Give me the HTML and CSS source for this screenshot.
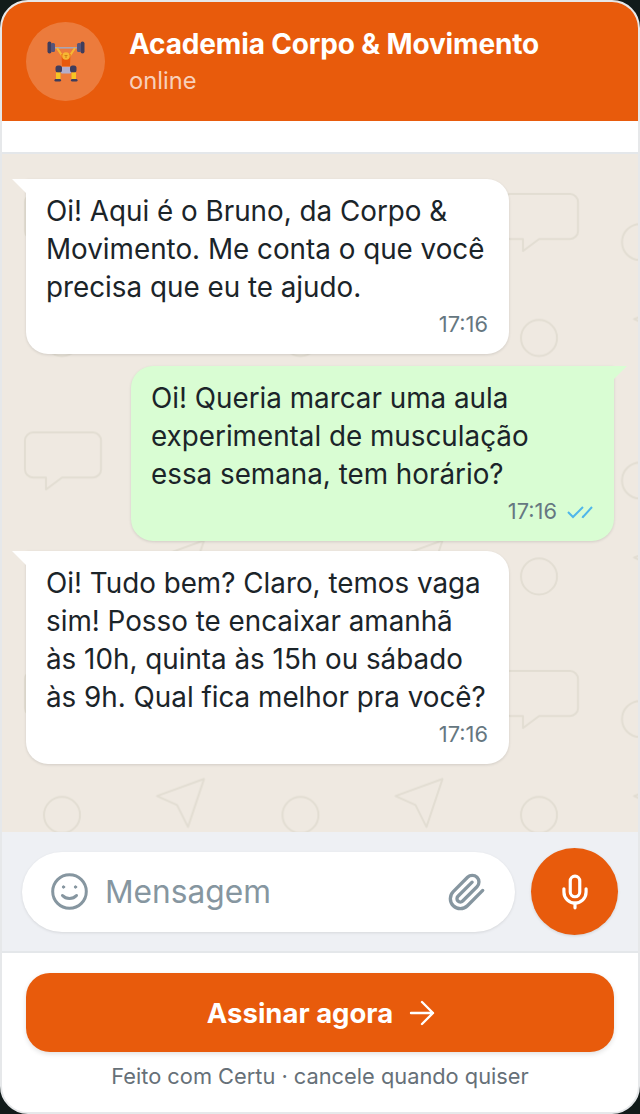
FILE: index.html
```html
<!DOCTYPE html>
<html lang="pt-BR">

<head>
    <meta charset="UTF-8">
    <meta name="viewport" content="width=device-width, initial-scale=1.0">
    <title>Academia Corpo &amp; Movimento</title>
    <link rel="stylesheet" href="styles.css">
</head>

<body>
    <div class="phone">
        <header class="chat-header">
            <div class="avatar">
                <svg width="40" height="42" viewBox="0 0 40 42">
                    <rect x="3" y="6" width="34" height="1.600" fill="#a9a5b4" />
                    <rect x="1.500" y="0.500" width="4" height="12" rx="2" fill="#3f3d5c" />
                    <rect x="5" y="2" width="4" height="9" rx="1.500" fill="#56547a" />
                    <rect x="34.500" y="0.500" width="4" height="12" rx="2" fill="#3f3d5c" />
                    <rect x="31" y="2" width="4" height="9" rx="1.500" fill="#56547a" />
                    <path d="M11 7l6 9M29 7l-6 9" stroke="#f7b733" stroke-width="2.200" fill="none" />
                    <path d="M15.500 13h9l-.5 12h-8z" fill="#e8590c" />
                    <circle cx="20" cy="15" r="3.800" fill="#f7b733" />
                    <path d="M18.500 14.500h3M20 14.500v2.500" stroke="#c9750f" stroke-width="0.800" fill="none" />
                    <rect x="15" y="26" width="10" height="6.500" rx="1" fill="#b3aecb" />
                    <rect x="9.500" y="24.500" width="6.500" height="7" rx="2.500" fill="#3f3d5c" />
                    <rect x="24" y="24.500" width="6.500" height="7" rx="2.500" fill="#3f3d5c" />
                    <rect x="10" y="31.500" width="4.500" height="6.500" fill="#f6c624" />
                    <rect x="25.500" y="31.500" width="4.500" height="6.500" fill="#f6c624" />
                    <rect x="8.500" y="38" width="6.500" height="2.400" rx="1.200" fill="#3f3d5c" />
                    <rect x="25" y="38" width="6.500" height="2.400" rx="1.200" fill="#3f3d5c" />
                </svg>
            </div>
            <div class="header-text">
                <div class="contact-name">Academia Corpo &amp; Movimento</div>
                <div class="contact-status">online</div>
            </div>
        </header>

        <div class="top-strip"></div>

        <main class="chat">
            <!-- wallpaper doodles -->
            <svg class="wallpaper" width="100%" height="100%">
                <defs>
                    <pattern id="doodles" width="238.5" height="238.5" patternUnits="userSpaceOnUse">
                        <g fill="none" stroke="#e2ddd2" stroke-width="2" stroke-linejoin="round">
                            <path d="M31 40h60a8 8 0 0 1 8 8v29a8 8 0 0 1-8 8H60L44 97V85H31a8 8 0 0 1-8-8V48a8 8 0 0 1 8-8Z" />
                            <circle cx="60" cy="184" r="18" />
                            <circle cx="161" cy="88" r="18" />
                            <path d="M155 165l47-17-16 48-11-22Z" />
                        </g>
                    </pattern>
                </defs>
                <rect width="100%" height="100%" fill="url(#doodles)" />
            </svg>

            <div class="bubble received">
                <p>Oi! Aqui é o Bruno, da Corpo &amp; Movimento. Me conta o que você precisa que eu te ajudo.</p>
                <div class="meta">17:16</div>
            </div>

            <div class="bubble sent">
                <p>Oi! Queria marcar uma aula experimental de musculação essa semana, tem horário?</p>
                <div class="meta">17:16
                    <svg class="ticks" width="26" height="14" viewBox="0 0 26 14">
                        <path d="M1 7l5 5 10-10M15 11.500l1 .5 9-10" fill="none" stroke="#4fb6ea" stroke-width="2" />
                    </svg>
                </div>
            </div>

            <div class="bubble received third">
                <p>Oi! Tudo bem? Claro, temos vaga sim! Posso te encaixar amanhã às 10h, quinta às 15h ou sábado às 9h. Qual fica melhor pra você?</p>
                <div class="meta">17:16</div>
            </div>
        </main>

        <div class="composer">
            <div class="input-pill">
                <svg class="smile" width="37" height="37" viewBox="0 0 37 37" fill="none" stroke="#8696a0" stroke-width="3" stroke-linecap="round">
                    <circle cx="18.500" cy="18.500" r="16.800" />
                    <path d="M11.500 22.500c3.500 4 10.500 4 14 0" />
                    <circle cx="12.500" cy="14" r="1.200" fill="#8696a0" stroke-width="1" />
                    <circle cx="24.500" cy="14" r="1.200" fill="#8696a0" stroke-width="1" />
                </svg>
                <span class="placeholder">Mensagem</span>
                <svg class="clip" width="40" height="40" viewBox="0 0 24 24" fill="none" stroke="#8696a0" stroke-width="2" stroke-linecap="round" stroke-linejoin="round">
                    <path d="m21.44 11.050-9.190 9.190a6 6 0 0 1-8.490-8.490l8.570-8.570A4 4 0 1 1 18 8.840l-8.590 8.570a2 2 0 0 1-2.830-2.830l8.490-8.480" />
                </svg>
            </div>
            <div class="mic-button">
                <svg width="38" height="38" viewBox="0 0 24 24" fill="none" stroke="#fff" stroke-width="2" stroke-linecap="round" stroke-linejoin="round">
                    <path d="M12 2a3 3 0 0 0-3 3v7a3 3 0 0 0 6 0V5a3 3 0 0 0-3-3Z" />
                    <path d="M19 10v2a7 7 0 0 1-14 0v-2" />
                    <path d="M12 19v3" />
                </svg>
            </div>
        </div>

        <footer class="cta">
            <button class="cta-button">Assinar agora
                <svg class="arrow" width="22" height="22" viewBox="5 5 14 14" fill="none" stroke="#fff" stroke-width="1.500" stroke-linecap="round" stroke-linejoin="round">
                    <path d="M5 12h14M12 5l7 7-7 7" />
                </svg>
            </button>
            <div class="cta-note">Feito com Certu · cancele quando quiser</div>
        </footer>
    </div>
</body>

</html>
```

FILE: styles.css
```css
* {
    box-sizing: border-box;
}

body {
    margin: 0;
    background-color: #111b1a;
    font-family: Inter, "Liberation Sans", sans-serif;
}

/* Outer rounded frame */
.phone {
    display: flex;
    flex-direction: column;
    width: 640px;
    height: 1114px;
    border: 2px solid #e6e8ea;
    border-radius: 28px;
    overflow: hidden;
    background-color: #fff;
}

/* Header */
.chat-header {
    display: flex;
    align-items: center;
    gap: 24px;
    height: 119px;
    padding: 0 24px;
    background-color: #e85b0c;
    flex-shrink: 0;
}

.avatar {
    display: flex;
    align-items: center;
    justify-content: center;
    width: 79px;
    height: 79px;
    border-radius: 50%;
    background-color: rgba(255, 255, 255, 0.2);
}

.contact-name {
    color: #fff;
    font-size: 28px;
    font-weight: 700;
    letter-spacing: -0.15px;
    line-height: 36px;
}

.contact-status {
    margin-top: 3px;
    color: rgba(255, 255, 255, 0.72);
    font-size: 23.7px;
    line-height: 32px;
}

.header-text {
    margin-top: -1px;
}

.top-strip {
    height: 33px;
    border-bottom: 2px solid #e4e7ea;
    flex-shrink: 0;
}

/* Chat area */
.chat {
    position: relative;
    display: flex;
    flex-direction: column;
    flex: 1;
    padding: 25px 24px 0;
    background-color: #efe9e1;
    overflow: hidden;
}

.wallpaper {
    position: absolute;
    top: 0;
    left: 0;
}

.bubble {
    position: relative;
    width: 483px;
    padding: 13px 21px 16px 20px;
    background-color: #fff;
    border-radius: 0 22px 22px 22px;
    box-shadow: 0 1px 3px rgba(0, 0, 0, 0.12);
    color: #1b2429;
    font-size: 27.8px;
    line-height: 38px;
}

.bubble p {
    margin: 0;
}

.bubble::before {
    content: "";
    position: absolute;
    top: 0;
    width: 14px;
    height: 14px;
    background-color: inherit;
}

.received::before {
    left: -14px;
    clip-path: polygon(0 0, 100% 0, 100% 100%);
}

.sent {
    align-self: flex-end;
    margin-top: 12px;
    background-color: #d9fdd3;
    border-radius: 22px 0 22px 22px;
}

.sent::before {
    right: -13px;
    clip-path: polygon(0 0, 100% 0, 0 100%);
}

.third {
    margin-top: 10px;
}

.meta {
    display: flex;
    align-items: center;
    justify-content: flex-end;
    gap: 10px;
    height: 28px;
    margin-top: 4px;
    color: #667781;
    font-size: 21.8px;
    line-height: 28px;
}

.ticks {
    margin-top: 1px;
}

/* Message input */
.composer {
    display: flex;
    align-items: center;
    gap: 16px;
    height: 121px;
    padding: 0 20px;
    background-color: #eef0f4;
    border-bottom: 2px solid #e4e7ea;
    flex-shrink: 0;
}

.input-pill {
    display: flex;
    align-items: center;
    width: 493px;
    height: 80px;
    padding: 0 28px 0 29px;
    border-radius: 40px;
    background-color: #fff;
    box-shadow: 0 1px 3px rgba(0, 0, 0, 0.1);
}

.placeholder {
    flex: 1;
    margin-left: 17px;
    color: #8696a0;
    font-size: 31.7px;
}

.mic-button {
    display: flex;
    align-items: center;
    justify-content: center;
    width: 87px;
    height: 87px;
    border-radius: 50%;
    background-color: #e85b0c;
    box-shadow: 0 1px 3px rgba(0, 0, 0, 0.12);
    flex-shrink: 0;
}

/* Subscribe footer */
.cta {
    flex-shrink: 0;
    height: 159px;
    padding: 20px 24px 0;
}

.cta-button {
    display: flex;
    align-items: center;
    justify-content: center;
    gap: 18px;
    width: 100%;
    height: 79px;
    border: none;
    border-radius: 24px;
    background-color: #e85b0c;
    box-shadow: 0 2px 5px rgba(0, 0, 0, 0.12);
    color: #fff;
    font-family: inherit;
    font-size: 27.5px;
    font-weight: 700;
}

.arrow {
    overflow: visible;
}

.cta-note {
    margin-top: 9px;
    color: #667078;
    font-size: 21.8px;
    line-height: 30px;
    text-align: center;
}
```
